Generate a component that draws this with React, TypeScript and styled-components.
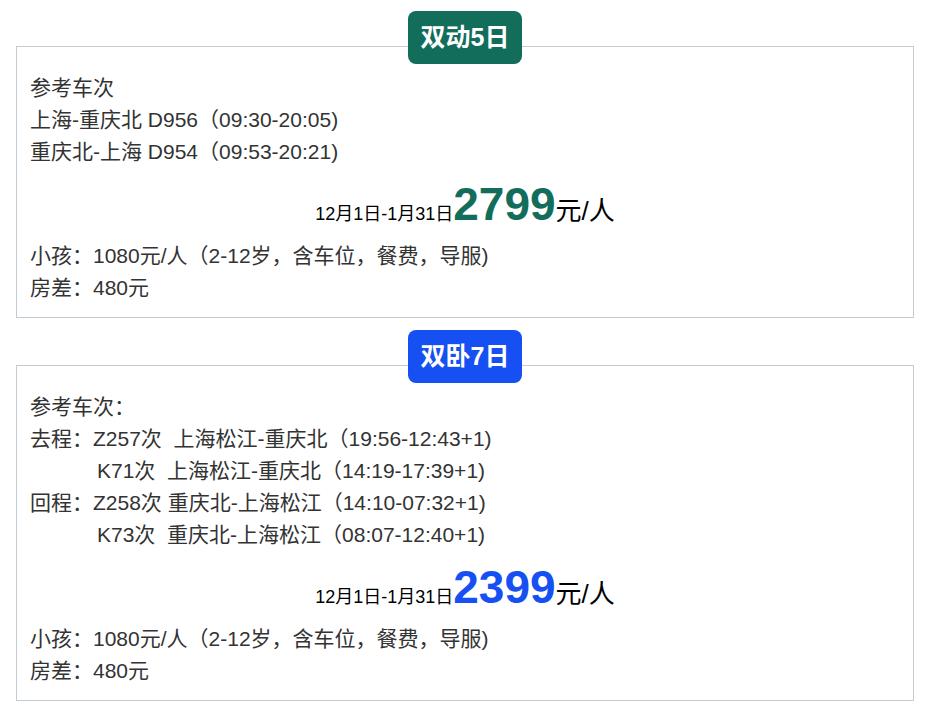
import styled, { createGlobalStyle } from "styled-components";

const GlobalStyle = createGlobalStyle`
  body {
    margin: 0;
    background: #ffffff;
    font-family: "Liberation Sans", Arial, "Noto Sans CJK SC", sans-serif;
  }
`;

const GREEN = "#136d5b";
const BLUE = "#1650f3";

type Route = { label?: string; text: string };

type Plan = {
  title: string;
  color: string;
  heading: string;
  routes: Route[];
  price: string;
};

const plans: Plan[] = [
  {
    title: "双动5日",
    color: GREEN,
    heading: "参考车次",
    routes: [
      { text: "上海-重庆北 D956（09:30-20:05)" },
      { text: "重庆北-上海 D954（09:53-20:21)" },
    ],
    price: "2799",
  },
  {
    title: "双卧7日",
    color: BLUE,
    heading: "参考车次：",
    routes: [
      { label: "去程：", text: "Z257次\u00a0 上海松江-重庆北（19:56-12:43+1)" },
      { label: "", text: "K71次\u00a0 上海松江-重庆北（14:19-17:39+1)" },
      { label: "回程：", text: "Z258次 重庆北-上海松江（14:10-07:32+1)" },
      { label: "", text: "K73次\u00a0 重庆北-上海松江（08:07-12:40+1)" },
    ],
    price: "2399",
  },
];

function App() {
  return (
    <>
      <GlobalStyle />
      <Page>
        {plans.map((plan) => (
          <Section key={plan.title}>
            <Badge $color={plan.color}>{plan.title}</Badge>
            <Card>
              <Line>{plan.heading}</Line>
              {plan.routes.map((r, i) =>
                r.label === undefined ? (
                  <Line key={i}>{r.text}</Line>
                ) : (
                  <Line key={i}>
                    <Label $empty={r.label === ""}>{r.label}</Label>
                    {r.text}
                  </Line>
                )
              )}
              <PriceRow>
                <DateRange>12月1日-1月31日</DateRange>
                <Amount $color={plan.color}>{plan.price}</Amount>
                <Unit>元/人</Unit>
              </PriceRow>
              <Line>小孩：1080元/人（2-12岁，含车位，餐费，导服)</Line>
              <Line>房差：480元</Line>
            </Card>
          </Section>
        ))}
      </Page>
    </>
  );
}

export default App;

const Page = styled.div`
  width: 898px;
  margin-left: 16px;
  padding-top: 11px;
  display: flex;
  flex-direction: column;
  gap: 12px;
`;

const Section = styled.section`
  display: flex;
  flex-direction: column;
  align-items: center;
`;

const Badge = styled.div<{ $color: string }>`
  position: relative;
  z-index: 1;
  height: 53px;
  line-height: 53px;
  padding: 0 13px;
  margin-bottom: -18px;
  border-radius: 8px;
  background: ${(p) => p.$color};
  color: #ffffff;
  font-size: 25px;
  font-weight: bold;
`;

const Card = styled.div`
  width: 100%;
  box-sizing: border-box;
  border: 1px solid #c3ccd4;
  padding: 25px 13px 13px;
  color: #333333;
  font-size: 21px;
`;

const Line = styled.div`
  line-height: 32px;
  white-space: pre;
`;

const Label = styled.span<{ $empty: boolean }>`
  display: inline-block;
  width: ${(p) => (p.$empty ? "67px" : "auto")};
`;

const PriceRow = styled.div`
  box-sizing: border-box;
  height: 72px;
  padding-top: 13px;
  display: flex;
  justify-content: center;
  align-items: baseline;
  color: #000000;
`;

const DateRange = styled.span`
  font-size: 18px;
  line-height: 1;
`;

const Amount = styled.span<{ $color: string }>`
  font-size: 46px;
  font-weight: bold;
  line-height: 1;
  color: ${(p) => p.$color};
`;

const Unit = styled.span`
  font-size: 26px;
  line-height: 1;
`;
